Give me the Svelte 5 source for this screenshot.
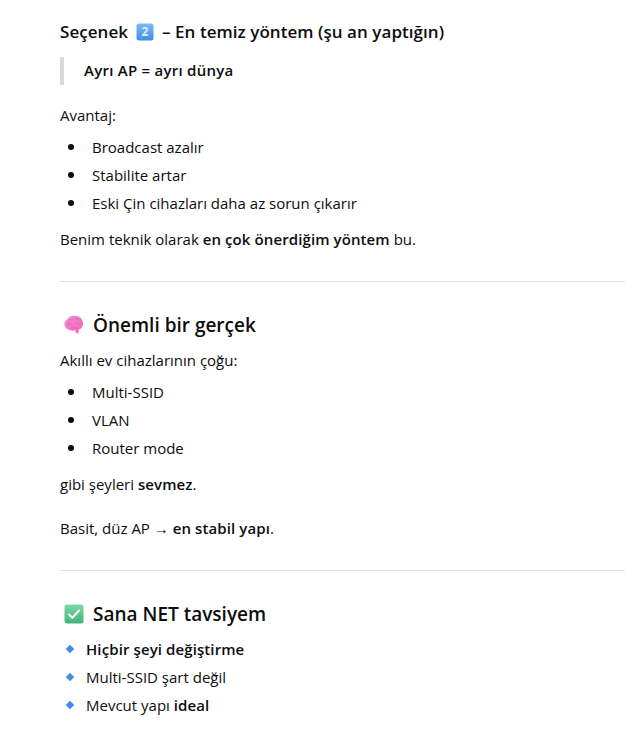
<script lang="ts">
	const firstPerks = ['Broadcast azalır', 'Stabilite artar', 'Eski Çin cihazları daha az sorun çıkarır'];
	const dislikes = ['Multi-SSID', 'VLAN', 'Router mode'];
</script>

<main class="message">
	<h3 class="option-title">
		Seçenek
		<svg class="key" viewBox="0 0 18 18" aria-hidden="true">
			<defs>
				<linearGradient id="keyFill" x1="0" y1="0" x2="0" y2="1">
					<stop offset="0" stop-color="#7db9f3" />
					<stop offset="1" stop-color="#3f8fe6" />
				</linearGradient>
				<linearGradient id="brainFill" x1="0" y1="0" x2="1" y2="1">
					<stop offset="0" stop-color="#ee8fd2" />
					<stop offset="1" stop-color="#fb5fc0" />
				</linearGradient>
				<linearGradient id="checkFill" x1="0" y1="0" x2="0" y2="1">
					<stop offset="0" stop-color="#7fd8a6" />
					<stop offset="1" stop-color="#45b37c" />
				</linearGradient>
			</defs>
			<rect x="0.5" y="0.5" width="17" height="17" rx="2.5" fill="url(#keyFill)" />
			<text x="9" y="13.2" text-anchor="middle">2</text>
		</svg>
		– En temiz yöntem (şu an yaptığın)
	</h3>

	<blockquote><strong>Ayrı AP = ayrı dünya</strong></blockquote>

	<p class="lead">Avantaj:</p>
	<ul>
		{#each firstPerks as perk}
			<li>{perk}</li>
		{/each}
	</ul>
	<p class="after-list">Benim teknik olarak <strong>en çok önerdiğim yöntem</strong> bu.</p>

	<hr />

	<h2>
		<svg class="emoji" viewBox="0 0 20 20" aria-hidden="true">
			<path d="M3.400 4.200C4.600 1.800 7.400.6 10 .8c3.400-.2 6.600 1.200 8 3.800 1.400 2.400 1.400 5.400.2 7.400-.8 1.400-2.200 2.200-3.600 2.400l.2 3.200c-.8.8-2.200.8-3 .2l-.6-2.600c-2.200.8-5 .6-7-.6C1.800 13.400.2 11 .4 8.600.5 6.800 1.800 5 3.400 4.200z" fill="url(#brainFill)" />
			<path d="M5 5.500c1.400-1.400 3.600-1.600 5.200-.6M11 3.600c1.800-.4 3.400.2 4.400 1.400M3.600 9.600c1.800-1 3.800-.8 5.200.4M11 8c1.600-.6 3.400-.2 4.600 1M8 13c1.400-.6 3-.6 4.200.2" fill="none" stroke="#d968b6" stroke-width="0.9" stroke-linecap="round" />
		</svg>
		Önemli bir gerçek
	</h2>
	<p class="intro">Akıllı ev cihazlarının çoğu:</p>
	<ul>
		{#each dislikes as item}
			<li>{item}</li>
		{/each}
	</ul>
	<p class="after-list">gibi şeyleri <strong>sevmez</strong>.</p>
	<p class="closing">Basit, düz AP <span class="arrow">→</span> <strong>en stabil yapı</strong>.</p>

	<hr />

	<h2>
		<svg class="emoji" viewBox="0 0 20 20" aria-hidden="true">
			<rect x="0.500" y="0.500" width="19" height="19" rx="2.500" fill="url(#checkFill)" />
			<path d="M5 10.500l3.400 3.200 6.600-7.200" fill="none" stroke="#fff" stroke-width="2" stroke-linecap="round" stroke-linejoin="round" />
		</svg>
		Sana NET tavsiyem
	</h2>
	<div class="advice">
		<div class="advice-row"><i></i><span><strong>Hiçbir şeyi değiştirme</strong></span></div>
		<div class="advice-row"><i></i><span>Multi-SSID şart değil</span></div>
		<div class="advice-row"><i></i><span>Mevcut yapı <strong>ideal</strong></span></div>
	</div>
</main>

<style>
	:global(body) {
		margin: 0;
		background: #fff;
	}

	.message {
		padding: 18px 0 15px 60px;
		color: #0d0d0d;
		font: 15px/28px 'Open Sans', 'Noto Sans', sans-serif;
	}

	strong {
		font-weight: 600;
		letter-spacing: 0.1px;
	}

	.option-title {
		display: flex;
		align-items: center;
		gap: 8px;
		margin: 0 0 11px;
		font-size: 17px;
		font-weight: 600;
		letter-spacing: 0.05px;
	}

	.key {
		width: 18px;
		height: 18px;
	}

	.key text {
		fill: #dfeefc;
		font: 700 12px 'Open Sans', sans-serif;
	}

	blockquote {
		margin: 0 0 16px;
		padding: 0 0 2px 20px;
		border-left: 4px solid #d9d9d9;
		line-height: 26px;
	}

	blockquote strong {
		letter-spacing: 0.25px;
	}

	p {
		margin: 0;
	}

	.lead {
		margin-bottom: 4px;
	}

	ul {
		margin: 0;
		padding: 0 0 0 8px;
		list-style: none;
	}

	li {
		display: flex;
		align-items: center;
		gap: 18px;
	}

	li::before {
		content: '';
		width: 6px;
		height: 6px;
		border-radius: 50%;
		background: #0d0d0d;
	}

	.after-list {
		margin-top: 8px;
	}

	hr {
		height: 1px;
		margin: 28px 0 28px;
		border: 0;
		background: #e0e0e0;
	}

	h2 {
		display: flex;
		align-items: center;
		gap: 9px;
		margin: 0 0 6px;
		padding-left: 4px;
		font-size: 19px;
		line-height: 30px;
		font-weight: 600;
	}

	.emoji {
		width: 20px;
		height: 20px;
	}

	.intro {
		margin-bottom: 4px;
	}

	.closing {
		margin: 16px 0 -1px;
	}

	.arrow {
		font-family: 'Liberation Sans', sans-serif;
	}

	.advice-row {
		display: flex;
		align-items: center;
		gap: 13px;
		padding-left: 7px;
	}

	.advice-row i {
		width: 6px;
		height: 6px;
		background: #3f8fe6;
		transform: rotate(45deg);
	}
</style>
